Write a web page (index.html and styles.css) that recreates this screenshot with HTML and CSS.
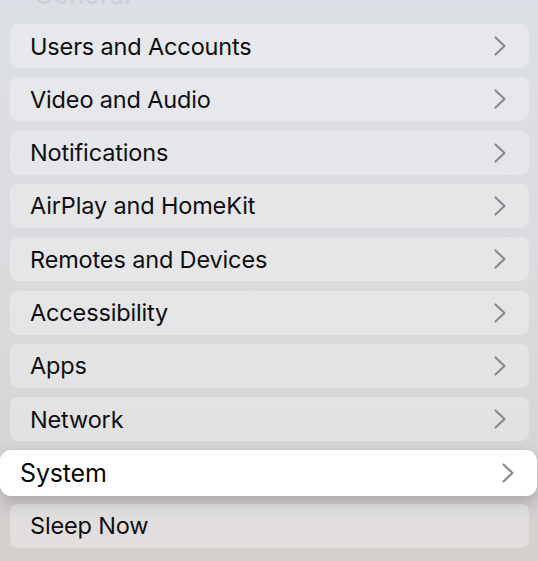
FILE: index.html
```html
<!DOCTYPE html>
<html lang="en">
<head>
    <meta charset="UTF-8">
    <meta name="viewport" content="width=device-width, initial-scale=1.0">
    <title>Settings</title>
    <link rel="stylesheet" href="styles.css">
</head>
<body>

<div class="screen">
    <h2 class="section-title"><span>General</span></h2>

    <ul class="menu">
        <li class="item"><span>Users and Accounts</span><svg class="chevron" viewBox="0 0 14 22"><path d="M2.5 2.5 L11.5 11 L2.5 19.5"/></svg></li>
        <li class="item"><span>Video and Audio</span><svg class="chevron" viewBox="0 0 14 22"><path d="M2.5 2.5 L11.5 11 L2.5 19.5"/></svg></li>
        <li class="item"><span>Notifications</span><svg class="chevron" viewBox="0 0 14 22"><path d="M2.5 2.5 L11.5 11 L2.5 19.5"/></svg></li>
        <li class="item"><span>AirPlay and HomeKit</span><svg class="chevron" viewBox="0 0 14 22"><path d="M2.5 2.5 L11.5 11 L2.5 19.5"/></svg></li>
        <li class="item"><span>Remotes and Devices</span><svg class="chevron" viewBox="0 0 14 22"><path d="M2.5 2.5 L11.5 11 L2.5 19.5"/></svg></li>
        <li class="item"><span>Accessibility</span><svg class="chevron" viewBox="0 0 14 22"><path d="M2.5 2.5 L11.5 11 L2.5 19.5"/></svg></li>
        <li class="item"><span>Apps</span><svg class="chevron" viewBox="0 0 14 22"><path d="M2.5 2.5 L11.5 11 L2.5 19.5"/></svg></li>
        <li class="item"><span>Network</span><svg class="chevron" viewBox="0 0 14 22"><path d="M2.5 2.5 L11.5 11 L2.5 19.5"/></svg></li>
        <li class="item focused"><span>System</span><svg class="chevron" viewBox="0 0 14 22"><path d="M2.5 2.5 L11.5 11 L2.5 19.5"/></svg></li>
        <li class="item"><span>Sleep Now</span></li>
    </ul>
</div>

</body>
</html>
```

FILE: styles.css
```css
body {
    margin: 0;
    font-family: Inter, "Noto Sans", sans-serif;
    background: linear-gradient(180deg, #dcdfe5 0%, #dbdbde 50%, #d3cfcd 100%);
    height: 561px;
    overflow: hidden;
}

.screen {
    padding: 0 9px 0 10px;
}

.section-title {
    margin: 0 0 0 24px;
    height: 24px;
    overflow: hidden;
}

.section-title span {
    display: block;
    margin-top: -20px;
    font-size: 26px;
    font-weight: 500;
    line-height: 30px;
    color: #cdd0d6;
}

.menu {
    list-style: none;
    margin: 0;
    padding: 0;
}

.item {
    display: flex;
    align-items: center;
    justify-content: space-between;
    height: 44px;
    margin-bottom: 9.33px;
    padding: 0 22px 0 20px;
    background-color: rgba(255, 255, 255, 0.3);
    border-radius: 8px;
    font-size: 23.5px;
    letter-spacing: -0.15px;
    color: #0e0e10;
    box-sizing: border-box;
}

.chevron {
    width: 14px;
    height: 22px;
    fill: none;
    stroke: #8a8a8f;
    stroke-width: 2.2;
    stroke-linecap: round;
    stroke-linejoin: round;
}

.focused {
    margin: -1px -8px 8.33px -10px;
    height: 46px;
    padding: 0 22px 0 20px;
    background-color: #fff;
    border-radius: 11px;
    font-size: 25px;
    color: #0a0a0a;
    box-shadow: 0 8px 18px rgba(0, 0, 0, 0.2);
}
```
